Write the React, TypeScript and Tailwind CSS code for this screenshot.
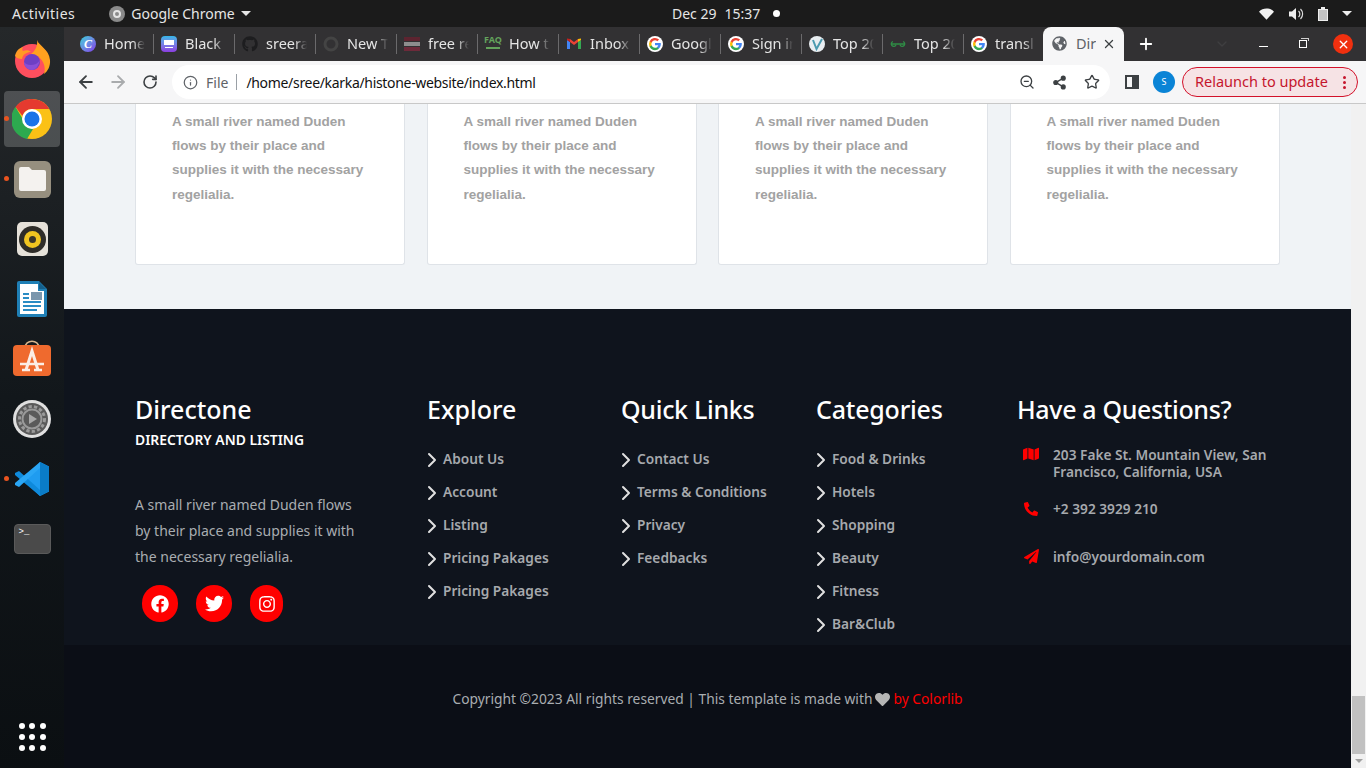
import React from 'react';
import { ChevronRight, ChevronDown, Plus, X, Info, ArrowLeft, ArrowRight, RotateCw, ZoomOut, Share2, Star } from 'lucide-react';
import { FaFacebook, FaTwitter, FaInstagram, FaMap, FaPhoneAlt, FaPaperPlane, FaHeart, FaGithub, FaGlobeAmericas } from 'react-icons/fa';

const ui = 'font-["Noto_Sans",sans-serif]';

const GoogleG = () => (
  <svg viewBox="0 0 24 24" className="w-4 h-4 rounded-full bg-white p-[1px]">
    <path fill="#4285F4" d="M22 12.2c0-.7-.1-1.4-.2-2H12v3.9h5.6a4.8 4.8 0 0 1-2.1 3.1v2.6h3.3c2-1.8 3.2-4.5 3.2-7.6z" />
    <path fill="#34A853" d="M12 22.5c2.8 0 5.2-.9 6.8-2.5l-3.3-2.6c-.9.6-2.1 1-3.5 1-2.7 0-5-1.8-5.8-4.3H2.8v2.6a10.5 10.5 0 0 0 9.2 5.8z" />
    <path fill="#FBBC05" d="M6.2 14.1a6.3 6.3 0 0 1 0-4.2V7.3H2.8a10.5 10.5 0 0 0 0 9.4z" />
    <path fill="#EA4335" d="M12 5.7c1.5 0 2.9.5 4 1.6l3-3A10.5 10.5 0 0 0 2.8 7.3l3.4 2.6C7 7.5 9.3 5.7 12 5.7z" />
  </svg>
);

const tabs: { label: string; icon: React.ReactNode }[] = [
  { label: 'Home', icon: <div className="w-4 h-4 rounded-full bg-gradient-to-br from-[#12d0d8] to-[#7d2ae8] flex items-center justify-center text-white italic font-bold text-[12px] font-['Liberation_Serif',serif] leading-none">C</div> },
  { label: 'Black', icon: <div className="w-4 h-4 rounded-[4px] bg-gradient-to-b from-[#2fb6e8] to-[#8a3be0] flex flex-col items-center justify-center gap-[2px]"><div className="w-[10px] h-[5px] bg-white" /><div className="w-[8px] h-[1px] bg-white" /></div> },
  { label: 'sreera', icon: <FaGithub className="w-4 h-4 text-[#1d1d1f]" /> },
  { label: 'New T', icon: <svg viewBox="0 0 16 16" className="w-4 h-4"><circle cx="8" cy="8" r="6" fill="none" stroke="#444" strokeWidth="3" /></svg> },
  { label: 'free re', icon: <div className="w-4 h-4 flex flex-col justify-center gap-[1px]"><div className="h-[4px] bg-[#5d2430]" /><div className="h-[4px] bg-[#8d8d8d]" /><div className="h-[4px] bg-[#6d2a3a]" /></div> },
  { label: 'How t', icon: <div className="w-4 h-[18px] flex flex-col items-center gap-[2px] text-[#63a35c] font-bold"><span className="text-[9px] leading-[10px]">FAQ</span><span className="h-[2px] w-[14px] bg-[#63a35c]" /></div> },
  { label: 'Inbox', icon: <svg viewBox="0 0 16 16" className="w-4 h-4"><path fill="#4285F4" d="M1 13V4l3 2v7z" /><path fill="#34A853" d="M12 13V6l3-2v9z" /><path fill="#EA4335" d="M4 6V3l4 3 4-3v3l-4 3z" /><path fill="#FBBC05" d="M12 3l3-.5V4l-3 2z" /><path fill="#C5221F" d="M1 2.5 4 3v3L1 4z" /></svg> },
  { label: 'Google', icon: <GoogleG /> },
  { label: 'Sign in', icon: <GoogleG /> },
  { label: 'Top 20', icon: <div className="w-4 h-4 rounded-full bg-[#e9eef2] flex items-center justify-center"><svg viewBox="0 0 16 16" className="w-4 h-4"><path d="M4 4l3.5 9L13 3" fill="none" stroke="#4a9ab0" strokeWidth="2" /></svg></div> },
  { label: 'Top 20', icon: <svg viewBox="0 0 16 16" className="w-4 h-4"><path d="M1 8h14M3 5.5a2.500 2.500 0 1 0 3 3.500M13 5.500a2.500 2.500 0 1 1-3 3.500" fill="none" stroke="#2f8d46" strokeWidth="1.300" /></svg> },
  { label: 'transl', icon: <GoogleG /> },
];

function DockIcon({ active, dot, children }: { active?: boolean; dot?: boolean; children: React.ReactNode }) {
  return (
    <div className="relative h-[60px] w-full flex items-center justify-center">
      {active && <div className="absolute left-[4px] top-[2px] w-[56px] h-[56px] rounded-[4px] bg-white/20" />}
      {dot && <div className="absolute left-[4px] top-[27px] w-[5px] h-[5px] rounded-full bg-[#e95420]" />}
      <div className="relative">{children}</div>
    </div>
  );
}

function Dock() {
  return (
    <div className="w-[64px] shrink-0 flex flex-col bg-gradient-to-b from-[#25282a] via-[#12171b] to-[#0b0f12]">
      <div className="pt-[2px] flex flex-col">
        <DockIcon>
          <svg viewBox="0 0 38 38" className="w-[38px] h-[38px]">
            <circle cx="19" cy="21" r="17" fill="#ff4f5e" />
            <path d="M24 0c2 6 12 9 13 20 .5 6-2 11-6 14 3-9-3-19-13-20 4-3 7-8 6-14z" fill="#ffa11f" />
            <path d="M2 16c1-5 4-8 8-9-1 2-1 3 0 4 3-1 6-1 8 1-4 0-8 2-9 7-3 0-6-1-7-3z" fill="#ff9a25" />
            <circle cx="19" cy="22" r="8" fill="#6e3fc4" />
            <path d="M11 22c2 3 7 4 12 2 2-1 3-3 4-4-1 5-4 10-8 10-5 0-8-4-8-8z" fill="#8a4fd6" />
          </svg>
        </DockIcon>
        <DockIcon active dot>
          <svg viewBox="0 0 40 40" className="w-[40px] h-[40px]">
            <circle cx="20" cy="20" r="20" fill="#fbc116" />
            <path d="M20 0a20 20 0 0 1 17.3 10H20a10 10 0 0 0-9.5 7L3.5 8A20 20 0 0 1 20 0z" fill="#e53a2f" />
            <path d="M3.5 8l8.700 14.500a10 10 0 0 0 8.800 7.400L15 40A20 20 0 0 1 3.500 8z" fill="#2da94f" />
            <circle cx="20" cy="20" r="10" fill="#fff" />
            <circle cx="20" cy="20" r="7.500" fill="#1a73e8" />
          </svg>
        </DockIcon>
        <DockIcon dot>
          <div className="w-[37px] h-[37px] rounded-[6px] bg-[#968f7f] flex items-center justify-center">
            <svg viewBox="0 0 27 24" className="w-[27px] h-[24px]">
              <path d="M2 0h8l3 3h12a2 2 0 0 1 2 2v17a2 2 0 0 1-2 2H2a2 2 0 0 1-2-2V2a2 2 0 0 1 2-2z" fill="#f4f2ef" />
            </svg>
          </div>
        </DockIcon>
        <DockIcon>
          <div className="w-[31px] h-[34px] rounded-[5px] bg-[#e5e1d9] flex items-center justify-center">
            <div className="w-[27px] h-[27px] rounded-full bg-[#2e2c28] flex items-center justify-center">
              <div className="w-[17px] h-[17px] rounded-full bg-[#f0c420] flex items-center justify-center">
                <div className="w-[7px] h-[7px] rounded-full bg-[#3a3528]" />
              </div>
            </div>
          </div>
        </DockIcon>
        <DockIcon>
          <svg viewBox="0 0 30 36" className="w-[30px] h-[36px]">
            <path d="M2 0h20l8 8v26a2 2 0 0 1-2 2H2a2 2 0 0 1-2-2V2a2 2 0 0 1 2-2z" fill="#1f7fb5" />
            <path d="M3 3h18v7h6v23H3z" fill="#fff" />
            <path d="M22 1l7 7h-7z" fill="#15608c" />
            <path d="M6 12h6v2H6zM6 16h6v2H6zM6 20h18v2H6zM6 24h18v2H6zM6 28h14v2H6z" fill="#2a8cc4" />
            <rect x="14" y="11" width="11" height="8" fill="#7a97ad" />
          </svg>
        </DockIcon>
        <DockIcon>
          <svg viewBox="0 0 38 38" className="w-[38px] h-[38px]">
            <path d="M12 8c0-9 14-9 14 0" fill="none" stroke="#d8b48c" strokeWidth="1.500" />
            <rect x="0" y="5" width="38" height="31" rx="4" fill="#ef6a2e" />
            <path d="M13 30l6-19 6 19" fill="none" stroke="#fbeee6" strokeWidth="3" />
            <path d="M7 24h24M9 30h8M21 30h8" fill="none" stroke="#fbeee6" strokeWidth="2.500" />
          </svg>
        </DockIcon>
        <DockIcon>
          <svg viewBox="0 0 38 38" className="w-[38px] h-[38px]">
            <circle cx="19" cy="19" r="19" fill="#e0e0e0" />
            <circle cx="19" cy="19" r="16" fill="#5a5a5a" />
            <circle cx="19" cy="19" r="12.500" fill="none" stroke="#9a9a9a" strokeWidth="3" strokeDasharray="3.300 2.200" />
            <circle cx="19" cy="19" r="9.500" fill="none" stroke="#9a9a9a" strokeWidth="2" />
            <path d="M16 14l8 5-8 5z" fill="#a8a8a8" />
          </svg>
        </DockIcon>
        <DockIcon dot>
          <svg viewBox="0 0 36 36" className="w-[36px] h-[36px]">
            <path d="M26 1l9 4.500v25L26 35 10 20z" fill="#1f9cf0" />
            <path d="M26 1v34l9-4.500v-25z" fill="#0a7cc7" />
            <path d="M1 12l4-2 21 19v6L1 14z" fill="#0f8adb" />
            <path d="M1 24l4 2 21-19V1L1 22z" fill="#2aa6f5" />
          </svg>
        </DockIcon>
        <DockIcon>
          <div className="w-[37px] h-[30px] rounded-[4px] bg-[#4a4a4a] border border-[#5a5a5a] text-white text-[9px] leading-[14px] pl-[4px] font-['Liberation_Mono',monospace]">&gt;_</div>
        </DockIcon>
      </div>
      <div className="mt-auto mb-[17px] mx-auto grid grid-cols-3 gap-[5px] w-[26px]">
        {Array.from({ length: 9 }).map((_, i) => (
          <div key={i} className="w-[6px] h-[6px] rounded-full bg-white" />
        ))}
      </div>
    </div>
  );
}

function TopBar() {
  return (
    <div className={`relative h-[27px] shrink-0 bg-[#1b1b1b] text-[#e6e6e6] text-[14px] flex items-center ${ui}`}>
      <span className="ml-[12px] tracking-[0.5px]">Activities</span>
      <div className="ml-[34px] w-4 h-4 rounded-full bg-[#8a8a8a] flex items-center justify-center">
        <div className="w-[8px] h-[8px] rounded-full border-2 border-[#e5e5e5]" />
      </div>
      <span className="ml-[6px]">Google Chrome</span>
      <div className="ml-[6px] w-0 h-0 border-x-[5px] border-x-transparent border-t-[5px] border-t-[#e6e6e6]" />
      <div className="absolute left-[672px] top-0 h-full flex items-center">
        <span>Dec 29</span>
        <span className="ml-[8px]">15:37</span>
        <div className="ml-[13px] w-[7px] h-[7px] rounded-full bg-white" />
      </div>
      <div className="ml-auto mr-[14px] flex items-center gap-[14px]">
        <svg viewBox="0 0 16 12" className="w-[15px] h-[12px]"><path d="M0 3.500C4-1 12-1 16 3.500L8 12z" fill="#f2f2f2" /></svg>
        <svg viewBox="0 0 16 16" className="w-[16px] h-[16px]"><path d="M1 5.500h3L8 2v12l-4-3.500H1z" fill="#eee" /><path d="M10.500 5a4 4 0 0 1 0 6M12.500 3a7 7 0 0 1 0 10" fill="none" stroke="#ddd" strokeWidth="1.200" /></svg>
        <div className="flex flex-col items-center">
          <div className="w-[4px] h-[2px] bg-[#eee]" />
          <div className="w-[10px] h-[12px] border border-[#eee] bg-[#eee]/80" />
        </div>
        <div className="w-0 h-0 border-x-[5px] border-x-transparent border-t-[5px] border-t-[#eee]" />
      </div>
    </div>
  );
}

function TabStrip() {
  return (
    <div className={`h-[34px] shrink-0 bg-[#323133] flex items-end pl-[8px] text-[#e4e4e4] text-[14.500px] ${ui}`}>
      {tabs.map((t, i) => (
        <div key={i} className="w-[81px] h-[34px] flex items-center pl-[8px] pb-[1px] relative">
          {t.icon}
          <span className="ml-[8px] w-[41px] whitespace-nowrap overflow-hidden [mask-image:linear-gradient(to_right,black_70%,transparent)]">{t.label}</span>
          {i < 11 && <div className="absolute -right-px top-[7px] h-[20px] w-px bg-[#6b6a6c]" />}
        </div>
      ))}
      <div className="relative -ml-px w-[81px] h-[34px] bg-[#f6f6f7] rounded-t-[8px] flex items-center pl-[9px] pb-[1px] text-[#5f6368]">
        <FaGlobeAmericas className="w-[15px] h-[15px] text-[#5f6368]" />
        <span className="ml-[9px] w-[20px] overflow-hidden whitespace-nowrap">Dir</span>
        <X className="ml-[6px] w-[14px] h-[14px] text-[#3c4043]" strokeWidth={2.2} />
      </div>
      <Plus className="ml-[13px] mb-[8px] w-[18px] h-[18px] text-white" strokeWidth={2.4} />
      <ChevronDown className="ml-[59px] mb-[9px] w-[16px] h-[16px] text-[#3f3e40]" />
      <div className="ml-auto flex items-center h-[34px]">
        <div className="w-[9px] h-px bg-white mt-[5px] mr-[31px]" />
        <div className="relative w-[8px] h-[8px] border border-white mr-[26px]">
          <div className="absolute -top-[3px] left-[1px] w-[8px] h-[3px] border-t border-r border-[#cfcfcf]" />
        </div>
        <div className="w-[20px] h-[20px] rounded-full bg-[#f0300f] flex items-center justify-center mr-[13px]">
          <X className="w-[13px] h-[13px] text-white" strokeWidth={2.5} />
        </div>
      </div>
    </div>
  );
}

function Toolbar() {
  return (
    <div className={`h-[43px] shrink-0 bg-[#f6f6f7] border-b border-[#c8c8c8] flex items-center ${ui}`}>
      <ArrowLeft className="ml-[12px] w-[20px] h-[20px] text-[#3c4043]" strokeWidth={2.2} />
      <ArrowRight className="ml-[12px] w-[20px] h-[20px] text-[#a9abad]" strokeWidth={2.2} />
      <RotateCw className="ml-[14px] w-[16px] h-[16px] text-[#3c4043]" strokeWidth={2.4} />
      <div className="ml-[14px] w-[938px] h-[34px] bg-white rounded-full flex items-center">
        <Info className="ml-[11px] w-[15px] h-[15px] text-[#5f6368]" strokeWidth={2} />
        <span className="ml-[8px] text-[14px] text-[#5f6368]">File</span>
        <div className="ml-[8px] w-px h-[16px] bg-[#9aa0a6]" />
        <span className="ml-[9px] text-[14px] text-[#111] tracking-[-0.32px]">/home/sree/karka/histone-website/index.html</span>
        <div className="ml-auto flex items-center gap-[17px] mr-[10px] text-[#3c4043]">
          <ZoomOut className="w-[16px] h-[16px]" strokeWidth={2} />
          <Share2 className="w-[15px] h-[15px]" strokeWidth={2.2} fill="currentColor" />
          <Star className="w-[16px] h-[16px]" strokeWidth={2} />
        </div>
      </div>
      <div className="ml-[15px] w-[14px] h-[14px] border-[2px] border-[#3c4043] flex justify-end">
        <div className="w-[5px] h-full bg-[#3c4043]" />
      </div>
      <div className="ml-[14px] w-[22px] h-[22px] rounded-full bg-[#0a84d6] text-white text-[9px] flex items-center justify-center">S</div>
      <div className="ml-[7px] w-[176px] h-[30px] rounded-full border border-[#d3112a] bg-[#f6e3e5] flex items-center text-[#c5162d] text-[14.5px]">
        <span className="ml-[12px]">Relaunch to update</span>
        <div className="ml-auto mr-[11px] flex flex-col gap-[2px]">
          <div className="w-[3px] h-[3px] rounded-full bg-[#c5162d]" />
          <div className="w-[3px] h-[3px] rounded-full bg-[#c5162d]" />
          <div className="w-[3px] h-[3px] rounded-full bg-[#c5162d]" />
        </div>
      </div>
    </div>
  );
}

function Card() {
  return (
    <div className="w-[270px] h-[161px] bg-white border border-t-0 border-[#dfe3e8] rounded-b-[3px] pt-[6px] px-[36px]">
      <p className="font-['Liberation_Sans',sans-serif] font-bold text-[13.5px] leading-[24.2px] text-[#a2a2a2]">
        A small river named Duden flows by their place and supplies it with the necessary regelialia.
      </p>
    </div>
  );
}

const footerFont = 'font-["Noto_Sans",sans-serif]';

function LinkCol({ title, links, width, titleClass }: { title: string; links: string[]; width: string; titleClass?: string }) {
  return (
    <div className={width}>
      <h2 className={`text-white text-[25px] font-medium leading-[30px] mb-[19px] ${titleClass || ''}`}>{title}</h2>
      <ul>
        {links.map((l, i) => (
          <li key={i} className="h-[33px] flex items-center text-[13.7px] font-semibold text-[#a6a9ad]">
            <ChevronRight className="w-[24px] h-[24px] text-[#e0e0e0] -ml-[7px] -mr-[1px]" strokeWidth={2} />
            {l}
          </li>
        ))}
      </ul>
    </div>
  );
}

function Social({ children, narrow }: { children: React.ReactNode; narrow?: boolean }) {
  return (
    <div className={`${narrow ? 'w-[33px]' : 'w-[36px]'} h-[37px] rounded-full bg-[#ff0000] text-white flex items-center justify-center`}>
      {children}
    </div>
  );
}

function Footer() {
  return (
    <footer className={footerFont}>
      <div className="h-[336px] bg-[#0f141d] pl-[71px] pt-[85px] flex">
        <div className="w-[292px]">
          <h2 className="text-white text-[25px] font-medium leading-[30px]">Directone</h2>
          <p className="text-white text-[13.9px] font-semibold leading-[20px] mt-[6px]">DIRECTORY AND LISTING</p>
          <p className="mt-[42px] w-[225px] text-[14px] leading-[26px] text-[#a9adb1]">
            A small river named Duden flows by their place and supplies it with the necessary regelialia.
          </p>
          <div className="mt-[15px] ml-[7px] flex gap-[18px]">
            <Social><FaFacebook className="w-[18px] h-[18px]" /></Social>
            <Social><FaTwitter className="w-[19px] h-[19px]" /></Social>
            <Social narrow><FaInstagram className="w-[18px] h-[18px]" /></Social>
          </div>
        </div>
        <LinkCol title="Explore" width="w-[194px]" links={['About Us', 'Account', 'Listing', 'Pricing Pakages', 'Pricing Pakages']} />
        <LinkCol title="Quick Links" width="w-[195px]" titleClass="tracking-[-0.3px]" links={['Contact Us', 'Terms & Conditions', 'Privacy', 'Feedbacks']} />
        <LinkCol title="Categories" width="w-[201px]" titleClass="tracking-[-0.2px]" links={['Food & Drinks', 'Hotels', 'Shopping', 'Beauty', 'Fitness', 'Bar&Club']} />
        <div className="w-[262px]">
          <h2 className="text-white text-[25px] font-medium leading-[30px] mb-[22px] whitespace-nowrap tracking-[-0.35px]">Have a Questions?</h2>
          <div className="flex text-[13.7px] font-semibold leading-[17px] text-[#a6a9ad]">
            <FaMap className="w-[16px] h-[16px] text-[#ff0000] ml-[6px] mr-[14px] shrink-0" />
            <span>203 Fake St. Mountain View, San Francisco, California, USA</span>
          </div>
          <div className="flex items-center mt-[20px] text-[13.7px] font-semibold leading-[17px] text-[#a6a9ad]">
            <FaPhoneAlt className="w-[14px] h-[14px] text-[#ff0000] ml-[7px] mr-[15px] shrink-0" />
            <span>+2 392 3929 210</span>
          </div>
          <div className="flex items-center mt-[31px] text-[13.7px] font-semibold leading-[17px] text-[#a6a9ad]">
            <FaPaperPlane className="w-[15px] h-[15px] text-[#ff0000] ml-[7px] mr-[14px] shrink-0" />
            <span>info@yourdomain.com</span>
          </div>
        </div>
      </div>
      <div className="h-[123px] bg-[#0b0e16] flex items-start justify-center pt-[44px] text-[13.8px] leading-[20px] text-[#a9adb1]">
        <span className="flex items-center">
          Copyright ©2023 All rights reserved | This template is made with
          <FaHeart className="w-[15px] h-[15px] mx-[3px] text-[#b5b5b5]" />
          <span className="text-[#ff0000]">by Colorlib</span>
        </span>
      </div>
    </footer>
  );
}

export default function App() {
  return (
    <div className="w-[1366px] h-[768px] overflow-hidden flex flex-col bg-black">
      <TopBar />
      <div className="flex flex-1 min-h-0">
        <Dock />
        <div className="flex-1 min-w-0 flex flex-col">
          <TabStrip />
          <Toolbar />
          <div className="flex flex-1 min-h-0">
            <main className="flex-1 min-w-0 bg-[#f0f3f6]">
              <div className="h-[205px] pl-[71px] flex gap-[21.5px]">
                <Card /><Card /><Card /><Card />
              </div>
              <Footer />
            </main>
            <div className="w-[15px] bg-[#f1f1f1] flex flex-col justify-end items-center">
              <div className="w-[13px] h-[58px] bg-[#c1c1c1]" />
              <div className="h-[14px] flex items-center">
                <div className="w-0 h-0 border-x-[4px] border-x-transparent border-t-[4px] border-t-[#a0a0a0]" />
              </div>
            </div>
          </div>
        </div>
      </div>
    </div>
  );
}
